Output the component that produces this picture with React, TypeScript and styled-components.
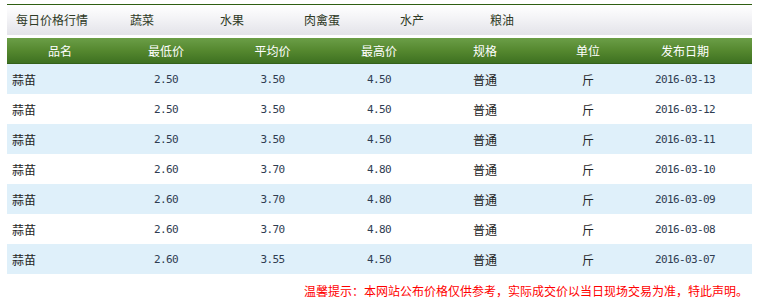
import React from 'react'
import styled, { createGlobalStyle } from 'styled-components'

const GlobalStyle = createGlobalStyle`
    body {
        margin: 0;
        background: #fff;
        font-family: "Noto Sans CJK SC", "Liberation Sans", sans-serif;
        font-size: 12px;
    }
`

const Wrapper = styled.div`
    width: 745px;
    margin: 4px 0 0 7px;
`

const Nav = styled.div`
    display: flex;
    height: 30px;
    border-top: 1px solid #2f5e12;
    background: linear-gradient(to bottom, #ffffff 0%, #f3f3f6 45%, #e3e3e9 100%);
`

const NavItem = styled.div`
    width: 90px;
    line-height: 30px;
    text-align: center;
    color: #2f3a26;
    font-size: 12px;
`

const Table = styled.div`
    margin-top: 3px;
`

const Row = styled.div<{ $striped?: boolean }>`
    display: grid;
    grid-template-columns: 106px 106px 107px 106px 106px 100px 1fr;
    height: 30px;
    align-items: center;
    background: ${p => (p.$striped ? '#dff0fa' : '#fff')};
`

const HeadRow = styled(Row)`
    height: 25px;
    background: linear-gradient(to bottom, #6b9e47 0%, #55882f 50%, #3e7121 100%);
    border-bottom: 1px solid #33611a;
`

const HeadCell = styled.div<{ $last?: boolean }>`
    text-align: center;
    padding-right: ${p => (p.$last ? '20px' : '0')};
    color: #fff;
    font-size: 12px;
`

const Cell = styled.div<{ $mono?: boolean; $left?: boolean; $last?: boolean }>`
    text-align: ${p => (p.$left ? 'left' : 'center')};
    padding-left: ${p => (p.$left ? '5px' : '0')};
    padding-right: ${p => (p.$last ? '20px' : '0')};
    color: ${p => (p.$mono ? '#2f3d52' : '#222')};
    font-family: ${p => (p.$mono ? '"DejaVu Sans Mono", "Liberation Mono", monospace' : 'inherit')};
    font-size: ${p => (p.$mono ? '11px' : '12px')};
    letter-spacing: ${p => (p.$mono ? '-0.6px' : '0')};
`

const Notice = styled.div`
    margin-top: 8px;
    padding-right: 4px;
    text-align: right;
    color: #ff0000;
    font-size: 12px;
`

const navs = ['每日价格行情', '蔬菜', '水果', '肉禽蛋', '水产', '粮油']
const heads = ['品名', '最低价', '平均价', '最高价', '规格', '单位', '发布日期']

const rows = [
    ['2.50', '3.50', '4.50', '2016-03-13'],
    ['2.50', '3.50', '4.50', '2016-03-12'],
    ['2.50', '3.50', '4.50', '2016-03-11'],
    ['2.60', '3.70', '4.80', '2016-03-10'],
    ['2.60', '3.70', '4.80', '2016-03-09'],
    ['2.60', '3.70', '4.80', '2016-03-08'],
    ['2.60', '3.55', '4.50', '2016-03-07'],
]

const App: React.FC = () => (
    <>
        <GlobalStyle />
        <Wrapper>
            <Nav>
                {navs.map(n => <NavItem key={n}>{n}</NavItem>)}
            </Nav>
            <Table>
                <HeadRow>
                    {heads.map((h, i) => <HeadCell key={h} $last={i === heads.length - 1}>{h}</HeadCell>)}
                </HeadRow>
                {rows.map((r, i) => (
                    <Row key={r[3]} $striped={i % 2 === 0}>
                        <Cell $left>蒜苗</Cell>
                        <Cell $mono>{r[0]}</Cell>
                        <Cell $mono>{r[1]}</Cell>
                        <Cell $mono>{r[2]}</Cell>
                        <Cell>普通</Cell>
                        <Cell>斤</Cell>
                        <Cell $mono $last>{r[3]}</Cell>
                    </Row>
                ))}
            </Table>
            <Notice>温馨提示：本网站公布价格仅供参考，实际成交价以当日现场交易为准，特此声明。</Notice>
        </Wrapper>
    </>
)

export default App
